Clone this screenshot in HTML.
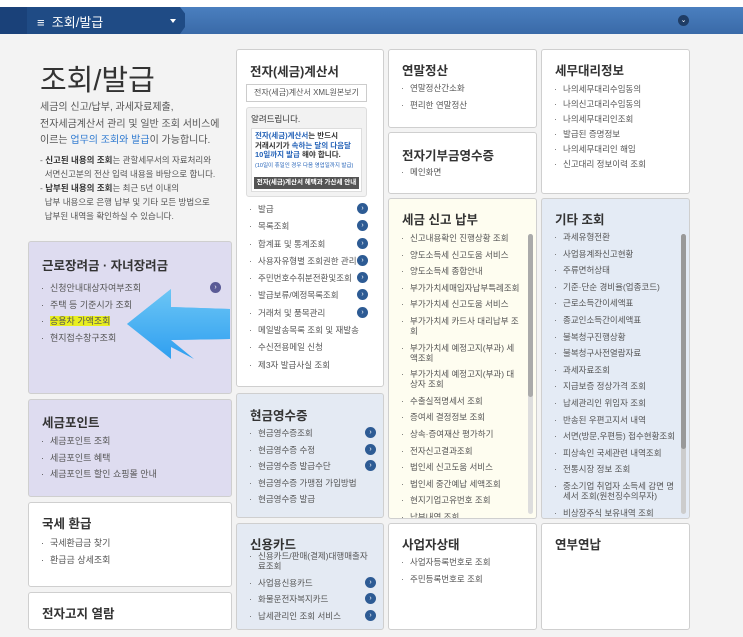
<!DOCTYPE html>
<html><head><meta charset="utf-8"><style>
*{margin:0;padding:0;box-sizing:border-box}
body{width:743px;height:637px;overflow:hidden;background:#f3f3f3;font-family:"Liberation Sans","Noto Sans CJK KR","NanumGothic",sans-serif;color:#444;position:relative}
.top{position:absolute;left:0;top:0;width:743px;height:7px;background:#fff}
.nav{position:absolute;left:0;top:7px;width:743px;height:27px;background:linear-gradient(#4a7fbf,#3a6aa8)}
.nav .l{position:absolute;left:0;top:0;width:185px;height:27px;background:#1f4b85;clip-path:polygon(0 0,180px 0,190px 13px,180px 27px,0 27px)}
.nav .l2{position:absolute;left:0;top:0;width:27px;height:27px;background:#1a4179}
.nav .t{position:absolute;left:37px;top:5px;color:#fff;font-size:13px}
.nav .dd{position:absolute;left:170px;top:12px;width:0;height:0;border-left:3px solid transparent;border-right:3px solid transparent;border-top:4px solid #fff}
.nav .c{position:absolute;left:678px;top:8px;width:11px;height:11px;border-radius:50%;background:#1f3d66;color:#fff;font-size:7px;text-align:center;line-height:11px}
.p{position:absolute;border:1px solid #cfcfcf;border-radius:3px;background:#fff}
.p h3{position:absolute;font-size:12.5px;color:#333;font-weight:bold;white-space:nowrap}
.p ul{position:absolute;list-style:none;font-size:9px;color:#555}
.p li{position:relative;padding-left:9px;line-height:10px;margin-bottom:6.6px}
.p li:before{content:"·";position:absolute;left:0;top:0}
.b{position:absolute;right:-16px;top:-1px;width:11px;height:11px;border-radius:50%;background:#2d5b94;color:#fff;font-size:7px;line-height:11px;text-align:center}
.sb{position:absolute;width:5px;border-radius:3px;background:#aaa}
</style></head><body>
<div class="top"></div>
<div class="nav"><div class="l"></div><div class="l2"></div><div class="t">≡ &nbsp;조회/발급</div><div class="dd"></div><div class="c">⌄</div></div>

<div style="position:absolute;left:40px;top:57px;font-size:29px;color:#333">조회/발급</div>
<div style="position:absolute;left:40px;top:100px;font-size:10px;line-height:16.5px;color:#555">세금의 신고/납부, 과세자료제출,<br>전자세금계산서 관리 및 일반 조회 서비스에<br>이르는 <span style="color:#2f7ad0">업무의 조회와 발급</span>이 가능합니다.</div>
<div style="position:absolute;left:40px;top:153px;font-size:8.5px;line-height:14px;color:#555">- <b style="color:#333">신고된 내용의 조회</b>는 관할세무서의 자료처리와<br>&nbsp;&nbsp;서면신고분의 전산 입력 내용을 바탕으로 합니다.<br>- <b style="color:#333">납부된 내용의 조회</b>는 최근 5년 이내의<br>&nbsp;&nbsp;납부 내용으로 은행 납부 및 기타 모든 방법으로<br>&nbsp;&nbsp;납부된 내역을 확인하실 수 있습니다.</div>

<div class="p" style="left:28px;top:241px;width:204px;height:153px;background:#dedcf0">
<h3 style="left:13px;top:13px">근로장려금 · 자녀장려금</h3>
<ul style="left:12px;top:41px;width:180px"><li>신청안내대상자여부조회<span class="b" style="right:0;background:#5a5b96">›</span></li><li>주택 등 기준시가 조회</li><li><span style="background:#e8ee1e">승용차 가액조회</span></li><li>현지접수창구조회</li></ul>
</div>
<svg style="position:absolute;left:124px;top:288px" width="108" height="72"><defs><linearGradient id="g" x1="0" x2="0" y1="0" y2="1"><stop offset="0" stop-color="#6cc6f5"/><stop offset="1" stop-color="#2f9ff0"/></linearGradient></defs><polygon points="3,36 47,1 47,19 106,21 106,51 47,52 70,71" fill="url(#g)"/><polygon points="3,36 47,1 47,19 106,21 106,51 47,52 47,71" fill="url(#g)"/></svg>

<div class="p" style="left:28px;top:399px;width:204px;height:98px;background:#dedcf0">
<h3 style="left:13px;top:12px">세금포인트</h3>
<ul style="left:12px;top:36px"><li>세금포인트 조회</li><li>세금포인트 혜택</li><li>세금포인트 할인 쇼핑몰 안내</li></ul>
</div>
<div class="p" style="left:28px;top:502px;width:204px;height:85px">
<h3 style="left:13px;top:10px">국세 환급</h3>
<ul style="left:12px;top:35px"><li>국세환급금 찾기</li><li>환급금 상세조회</li></ul>
</div>
<div class="p" style="left:28px;top:592px;width:204px;height:38px">
<h3 style="left:13px;top:10px">전자고지 열람</h3>
</div>

<div class="p" style="left:236px;top:49px;width:148px;height:338px">
<h3 style="left:13px;top:11px">전자(세금)계산서</h3>
<div style="position:absolute;left:9px;top:34px;width:121px;height:18px;border:1px solid #ccc;font-size:8px;line-height:16px;text-align:center;color:#555;white-space:nowrap">전자(세금)계산서 XML원본보기</div>
<div style="position:absolute;left:9px;top:57px;width:121px;height:90px;border:1px solid #ddd;border-radius:3px;background:#f2f2f2">
<div style="position:absolute;left:4px;top:5px;font-size:8.5px;color:#333">알려드립니다.</div>
<div style="position:absolute;left:4px;top:20px;width:111px;height:64px;background:#fff;border:1px solid #ddd;font-size:7.5px;line-height:9.5px;padding:2px 3px;color:#333;font-weight:bold;white-space:nowrap;overflow:hidden"><span style="color:#2563b8">전자(세금)계산서</span>는 반드시<br>거래시기가 <span style="color:#2563b8">속하는 달의 다음달<br>10일까지 발급</span> 해야 합니다.<br><span style="color:#2563b8;font-size:5.5px;font-weight:normal">(10일이 휴일인 경우 다음 영업일까지 발급)</span>
<div style="position:absolute;left:2px;top:48px;width:105px;height:12px;background:#555;color:#fff;font-size:6.5px;line-height:12px;text-align:center">전자(세금)계산서 혜택과 가산세 안내</div></div>
</div>
<ul style="left:12px;top:154px;width:115px;font-size:8.5px"><li style="margin-bottom:7.3px">발급<span class="b" style="right:-4px">›</span></li><li style="margin-bottom:7.3px">목록조회<span class="b" style="right:-4px">›</span></li><li style="margin-bottom:7.3px">합계표 및 통계조회<span class="b" style="right:-4px">›</span></li><li style="margin-bottom:7.3px">사용자유형별 조회권한 관리<span class="b" style="right:-4px">›</span></li><li style="margin-bottom:7.3px">주민번호수취분전환및조회<span class="b" style="right:-4px">›</span></li><li style="margin-bottom:7.3px">발급보류/예정목록조회<span class="b" style="right:-4px">›</span></li><li style="margin-bottom:7.3px">거래처 및 품목관리<span class="b" style="right:-4px">›</span></li><li style="margin-bottom:7.3px">메일발송목록 조회 및 재발송</li><li style="margin-bottom:7.3px">수신전용메일 신청</li><li>제3자 발급사실 조회</li></ul>
</div>
<div class="p" style="left:236px;top:393px;width:148px;height:125px;background:#e4eaf3">
<h3 style="left:13px;top:11px">현금영수증</h3>
<ul style="left:12px;top:34px;width:125px;font-size:8.5px"><li>현금영수증조회<span class="b" style="right:-2px">›</span></li><li>현금영수증 수정<span class="b" style="right:-2px">›</span></li><li>현금영수증 발급수단<span class="b" style="right:-2px">›</span></li><li>현금영수증 가맹점 가입방법</li><li>현금영수증 발급</li></ul>
</div>
<div class="p" style="left:236px;top:523px;width:148px;height:107px;background:#e4eaf3">
<h3 style="left:13px;top:10px">신용카드</h3>
<ul style="left:12px;top:28px;width:125px;font-size:8.5px"><li style="line-height:9.5px">신용카드/판매(결제)대행매출자료조회</li><li>사업용신용카드<span class="b" style="right:-2px">›</span></li><li>화물운전자복지카드<span class="b" style="right:-2px">›</span></li><li>납세관리인 조회 서비스<span class="b" style="right:-2px">›</span></li></ul>
</div>

<div class="p" style="left:388px;top:49px;width:149px;height:79px">
<h3 style="left:13px;top:10px">연말정산</h3>
<ul style="left:12px;top:33px;font-size:8.5px"><li>연말정산간소화</li><li>편리한 연말정산</li></ul>
</div>
<div class="p" style="left:388px;top:132px;width:149px;height:62px">
<h3 style="left:13px;top:12px">전자기부금영수증</h3>
<ul style="left:12px;top:34px;font-size:8.5px"><li>메인화면</li></ul>
</div>
<div class="p" style="left:388px;top:198px;width:149px;height:321px;background:#fefdf0;overflow:hidden">
<h3 style="left:13px;top:10px">세금 신고 납부</h3>
<ul style="left:12px;top:34px;width:118px;font-size:8.5px"><li>신고내용확인 진행상황 조회</li><li>양도소득세 신고도움 서비스</li><li>양도소득세 종합안내</li><li style="white-space:nowrap">부가가치세매입자납부특례조회</li><li>부가가치세 신고도움 서비스</li><li>부가가치세 카드사 대리납부 조회</li><li>부가가치세 예정고지(부과) 세액조회</li><li>부가가치세 예정고지(부과) 대상자 조회</li><li>수출실적명세서 조회</li><li>증여세 결정정보 조회</li><li>상속·증여재산 평가하기</li><li>전자신고결과조회</li><li>법인세 신고도움 서비스</li><li>법인세 중간예납 세액조회</li><li>현지기업고유번호 조회</li><li>납부내역 조회</li></ul>
<div class="sb" style="left:139px;top:35px;height:280px;background:#ddd"></div><div class="sb" style="left:139px;top:35px;height:163px"></div>
</div>
<div class="p" style="left:388px;top:523px;width:149px;height:107px">
<h3 style="left:13px;top:10px">사업자상태</h3>
<ul style="left:12px;top:33px;font-size:8.5px"><li>사업자등록번호로 조회</li><li>주민등록번호로 조회</li></ul>
</div>

<div class="p" style="left:541px;top:49px;width:149px;height:145px">
<h3 style="left:13px;top:10px">세무대리정보</h3>
<ul style="left:12px;top:34px;font-size:8.5px"><li style="margin-bottom:5px">나의세무대리수임동의</li><li style="margin-bottom:5px">나의신고대리수임동의</li><li style="margin-bottom:5px">나의세무대리인조회</li><li style="margin-bottom:5px">발급된 증명정보</li><li style="margin-bottom:5px">나의세무대리인 해임</li><li>신고대리 정보이력 조회</li></ul>
</div>
<div class="p" style="left:541px;top:198px;width:149px;height:321px;background:#e4ebf5;overflow:hidden">
<h3 style="left:13px;top:10px">기타 조회</h3>
<ul style="left:12px;top:33px;width:124px;font-size:8.5px"><li>과세유형전환</li><li>사업용계좌신고현황</li><li>주류면허상태</li><li>기준·단순 경비율(업종코드)</li><li>근로소득간이세액표</li><li>종교인소득간이세액표</li><li>불복청구진행상황</li><li>불복청구사전열람자료</li><li>과세자료조회</li><li>지급보증 정상가격 조회</li><li>납세관리인 위임자 조회</li><li>반송된 우편고지서 내역</li><li style="white-space:nowrap">서면(방문,우편등) 접수현황조회</li><li>피상속인 국세관련 내역조회</li><li>전통시장 정보 조회</li><li>중소기업 취업자 소득세 감면 명세서 조회(원천징수의무자)</li><li>비상장주식 보유내역 조회</li></ul>
<div class="sb" style="left:139px;top:35px;height:280px;background:#ccc"></div><div class="sb" style="left:139px;top:35px;height:215px;background:#999"></div>
</div>
<div class="p" style="left:541px;top:523px;width:149px;height:107px">
<h3 style="left:13px;top:10px">연부연납</h3>
</div>
</body></html>
